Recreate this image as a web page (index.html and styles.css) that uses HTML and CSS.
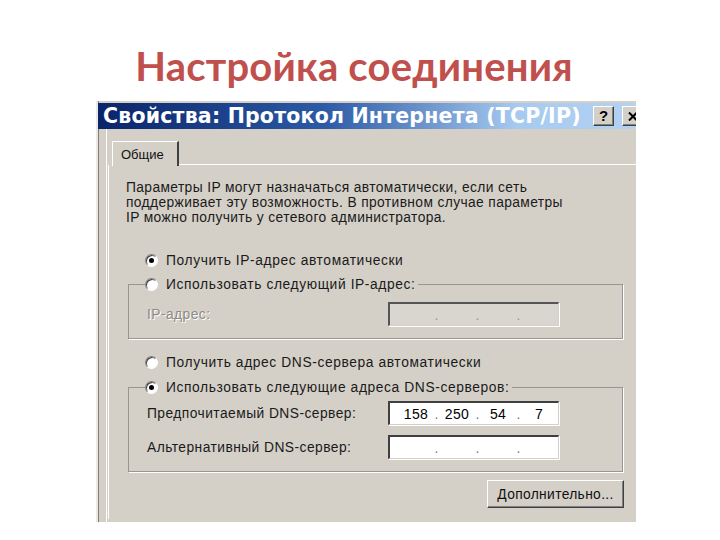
FILE: index.html
```html
<!DOCTYPE html>
<html lang="ru">
<head>
<meta charset="utf-8">
<title>Настройка соединения</title>
<link rel="stylesheet" href="styles.css">
</head>
<body>
<h1 class="title">Настройка соединения</h1>
<div class="shot">
  <div class="titlebar">
    <span class="tb-text">Свойства: Протокол Интернета (TCP/IP)</span>
    <span class="tb-btn help">?</span>
    <span class="tb-btn close"><svg width="10" height="9" viewBox="0 0 10 9"><path d="M1 0.5 L9 8.5 M9 0.5 L1 8.5" stroke="#000" stroke-width="2" fill="none"/></svg></span>
  </div>
  <div class="dlg-body">
    <div class="tabs"><div class="tab">Общие</div><div class="tab-line"></div></div>
    <div class="panel">
      <p class="intro">Параметры IP могут назначаться автоматически, если сеть<br>поддерживает эту возможность. В противном случае параметры<br>IP можно получить у сетевого администратора.</p>
      <div class="radio-row first"><span class="radio on"></span><span>Получить IP-адрес автоматически</span></div>
      <fieldset class="group g1">
        <legend class="radio-row"><span class="radio"></span><span>Использовать следующий IP-адрес:</span></legend>
        <div class="field-row">
          <span class="lbl disabled">IP-адрес:</span>
          <div class="ipbox off"><span class="seg"></span><span class="dot">.</span><span class="seg"></span><span class="dot">.</span><span class="seg"></span><span class="dot">.</span><span class="seg"></span></div>
        </div>
      </fieldset>
      <div class="radio-row r3"><span class="radio"></span><span>Получить адрес DNS-сервера автоматически</span></div>
      <fieldset class="group g2">
        <legend class="radio-row"><span class="radio on"></span><span>Использовать следующие адреса DNS-серверов:</span></legend>
        <div class="field-row">
          <span class="lbl">Предпочитаемый DNS-сервер:</span>
          <div class="ipbox"><span class="seg">158</span><span class="dot">.</span><span class="seg">250</span><span class="dot">.</span><span class="seg">54</span><span class="dot">.</span><span class="seg">7</span></div>
        </div>
        <div class="field-row second">
          <span class="lbl">Альтернативный DNS-сервер:</span>
          <div class="ipbox"><span class="seg"></span><span class="dot">.</span><span class="seg"></span><span class="dot">.</span><span class="seg"></span><span class="dot">.</span><span class="seg"></span></div>
        </div>
      </fieldset>
      <div class="btn-row"><button class="btn"><u>Д</u>ополнительно...</button></div>
    </div>
  </div>
</div>
</body>
</html>
```

FILE: styles.css
```css
* { box-sizing: border-box; }
html, body { margin: 0; padding: 0; background: #fff; }
body { width: 720px; height: 540px; overflow: hidden; font-family: "Liberation Sans", Arial, sans-serif; }

.title {
  margin: 38px 0 0 0;
  height: 56px;
  text-align: center;
  font-family: Lato, "Open Sans", sans-serif;
  font-weight: 700;
  font-size: 40px;
  line-height: 56px;
  color: #c0504d;
  letter-spacing: 0.2px;
  padding-right: 12px;
}

.shot {
  margin: 7px 0 0 96px;
  width: 540px;
  height: 421px;
  background: #d4d0c8;
  border-left: 2px solid #ebe9e4;
  box-shadow: inset 1px 0 0 #7f7c75;
  overflow: hidden;
  display: flex;
  flex-direction: column;
  padding-top: 2px;
}

.titlebar {
  height: 26px;
  background: linear-gradient(to right, #0a246a 0%, #2c5aa6 42%, #a6caf0 78%, #b4d2f2 100%);
  display: flex;
  align-items: center;
  padding-left: 5px;
  flex: none;
  overflow: hidden;
}
.tb-text {
  flex: none;
  color: #fff;
  font-family: "DejaVu Sans", Verdana, sans-serif;
  font-weight: 700;
  font-size: 20.5px;
  letter-spacing: 0.2px;
  white-space: nowrap;
  width: 490px;
}
.tb-btn {
  flex: none;
  width: 21px;
  height: 20px;
  background: #d4d0c8;
  border-top: 1px solid #fff;
  border-left: 1px solid #fff;
  border-right: 1px solid #404040;
  border-bottom: 1px solid #404040;
  box-shadow: inset -1px -1px 0 #808080;
  font-weight: 700;
  font-size: 15px;
  line-height: 18px;
  text-align: center;
  color: #000;
}
.tb-btn.close {
  margin-left: 8px;
  display: flex;
  align-items: center;
  justify-content: center;
}

.dlg-body {
  flex: 1;
  display: flex;
  flex-direction: column;
  padding: 11px 0 3px 1px;
  border-left: 1px solid #fff;
  margin-left: 8px;
}

.tabs { display: flex; align-items: flex-end; height: 25px; flex: none; }
.tab {
  margin-left: 4px;
  width: 67px;
  height: 25px;
  border-top: 1px solid #fff;
  border-left: 1px solid #fff;
  border-right: 2px solid #404040;
  font-size: 13px;
  color: #111;
  padding: 5px 0 0 8px;
  background: #d4d0c8;
  position: relative;
  z-index: 1;
  margin-bottom: -1px;
}
.tab-line { flex: 1; border-bottom: 1px solid #fff; height: 1px; }

.panel {
  flex: 1;
  border-left: 1px solid #fff;
  display: flex;
  flex-direction: column;
  padding: 0;
  color: #1a1a1a;
  font-size: 13.8px;
}

.intro {
  margin: 15px 0 0 17px;
  line-height: 15px;
  white-space: nowrap;
  letter-spacing: 0.38px;
}

.radio-row {
  display: flex;
  align-items: center;
  height: 20px;
  gap: 8px;
  white-space: nowrap;
  letter-spacing: 0.6px;
}
.radio-row.first { margin: 25px 0 0 36px; }
.radio-row.r3 { margin: 13px 0 0 36px; }

.radio {
  flex: none;
  width: 13px;
  height: 13px;
  border-radius: 50%;
  background: #fff;
  border: 1px solid;
  border-color: #808080 #fff #fff #808080;
  box-shadow: inset 1px 1px 0 #404040;
  position: relative;
}
.radio.on::after {
  content: "";
  position: absolute;
  left: 3px;
  top: 3px;
  width: 5px;
  height: 5px;
  border-radius: 50%;
  background: #000;
}

.group {
  margin: 4px 13px 0 19px;
  padding: 0 0 0 18px;
  border: 1px solid #9a968e;
  box-shadow: 1px 1px 0 #fff;
  min-width: 0;
}
.group legend {
  padding: 0 3px 0 0;
  margin-left: -2px;
  background: #d4d0c8;
}
.g1 { height: 65px; }
.g2 { height: 95px; margin-top: 5px; }

.field-row {
  display: flex;
  align-items: center;
  height: 24px;
  letter-spacing: 0.45px;
}
.g1 .field-row { margin-top: 8px; }
.g2 .field-row { margin-top: 4px; }
.g2 .field-row.second { margin-top: 10px; }
.lbl { width: 241px; white-space: nowrap; }
.lbl.disabled { color: #8d8a84; text-shadow: 1px 1px 0 #fff; }

.ipbox {
  flex: none;
  width: 171px;
  height: 24px;
  display: flex;
  align-items: center;
  padding-left: 8px;
  background: #fff;
  border-top: 2px solid #404040;
  border-left: 2px solid #404040;
  border-right: 1px solid #d4d0c8;
  border-bottom: 1px solid #d4d0c8;
  box-shadow: 1px 1px 0 #fff;
  font-size: 14px;
  color: #000;
  letter-spacing: 0.3px;
}
.ipbox.off { background: #d9d6cf; border-top-color: #555; border-left-color: #555; }
.ipbox .seg { width: 36px; text-align: center; }
.ipbox .dot { width: 5px; text-align: center; color: #777; }
.ipbox.off .dot { color: #999; }

.btn-row { display: flex; justify-content: flex-end; margin: 8px 12px 0 0; }
.btn {
  width: 137px;
  height: 28px;
  background: #d4d0c8;
  border-top: 1px solid #fff;
  border-left: 1px solid #fff;
  border-right: 1px solid #404040;
  border-bottom: 1px solid #404040;
  box-shadow: inset -1px -1px 0 #808080;
  font-family: "Liberation Sans", Arial, sans-serif;
  font-size: 13.8px;
  letter-spacing: 0.35px;
  color: #111;
  padding: 0;
}
```
